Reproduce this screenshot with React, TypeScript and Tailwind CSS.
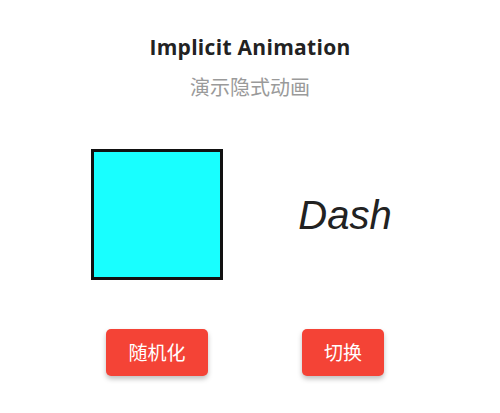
import React from "react";

const font = { fontFamily: '"Open Sans", "Noto Sans CJK SC", sans-serif' };

const ActionButton = ({ text }: { text: string }) => (
  <button
    className="h-[47px] rounded-[5px] bg-[#f44336] px-[22px] text-[19px] font-normal text-white shadow-[0_3px_5px_rgba(0,0,0,0.25)]"
    style={{ fontFamily: '"Noto Sans CJK SC", sans-serif' }}
  >
    {text}
  </button>
);

const App = () => {
  const [flag, setFlag] = React.useState(false);
  return (
    <div className="flex h-[413px] w-[500px] flex-col items-center bg-white" style={font}>
      <h1 className="mt-[32px] text-[21px] font-bold leading-[30px] tracking-[0.3px] text-[#222]">
        Implicit Animation
      </h1>
      <p
        className="mt-[12px] text-[20px] leading-[26px] text-[#9a9a9a]"
        style={{ fontFamily: '"Noto Sans CJK SC", sans-serif' }}
      >
        演示隐式动画
      </p>
      <div className="mt-[49px] grid grid-cols-[150px_150px] items-center justify-items-center gap-[36px]">
        <div className="h-[131px] w-[132px] border-[3px] border-[#111] bg-[#18ffff]" />
        <span
          className="ml-[4px] text-[40px] italic leading-none text-[#222]"
          style={{ fontFamily: '"Liberation Sans", sans-serif' }}
        >
          {flag ? "Flutter" : "Dash"}
        </span>
      </div>
      <div className="mt-[49px] grid grid-cols-[150px_150px] justify-items-center gap-[36px]">
        <ActionButton text="随机化" />
        <div onClick={() => setFlag(!flag)}>
          <ActionButton text="切换" />
        </div>
      </div>
    </div>
  );
};

export default App;
